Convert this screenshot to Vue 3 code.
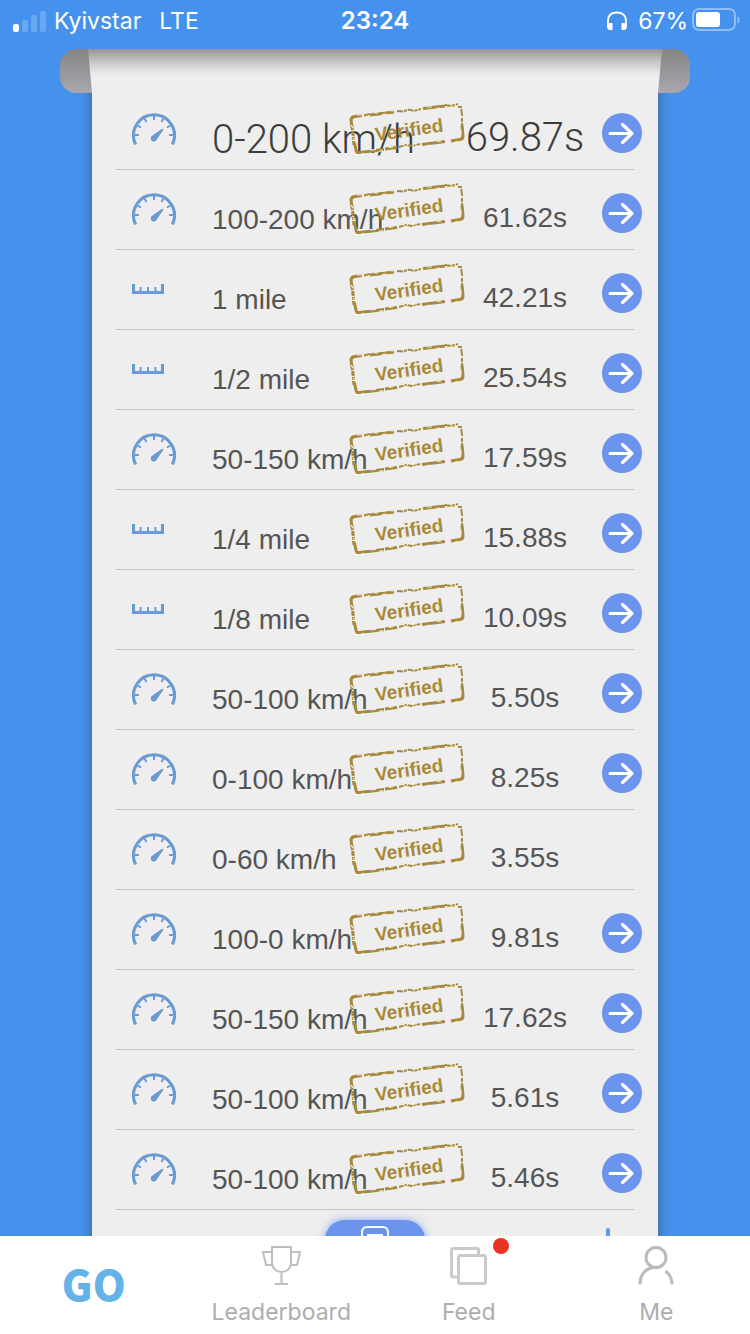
<script setup>
  import { ref } from "vue"

  const results = ref([
    { type: "speed", label: "0-200 km/h", time: "69.87s", link: true },
    { type: "speed", label: "100-200 km/h", time: "61.62s", link: true },
    { type: "distance", label: "1 mile", time: "42.21s", link: true },
    { type: "distance", label: "1/2 mile", time: "25.54s", link: true },
    { type: "speed", label: "50-150 km/h", time: "17.59s", link: true },
    { type: "distance", label: "1/4 mile", time: "15.88s", link: true },
    { type: "distance", label: "1/8 mile", time: "10.09s", link: true },
    { type: "speed", label: "50-100 km/h", time: "5.50s", link: true },
    { type: "speed", label: "0-100 km/h", time: "8.25s", link: true },
    { type: "speed", label: "0-60 km/h", time: "3.55s", link: false },
    { type: "speed", label: "100-0 km/h", time: "9.81s", link: true },
    { type: "speed", label: "50-150 km/h", time: "17.62s", link: true },
    { type: "speed", label: "50-100 km/h", time: "5.61s", link: true },
    { type: "speed", label: "50-100 km/h", time: "5.46s", link: true }
  ])

  // angles of the dial ticks, in degrees from the top
  const ticks = [-90, -60, -30, 0, 30, 60, 90]
</script>

<template>
  <div class="app">
    <header class="status-bar">
      <div class="status-left">
        <svg width="36" height="22" viewBox="0 0 36 22" fill="#fff">
          <rect x="3" y="14" width="6" height="8" rx="2" />
          <rect x="12" y="10" width="6" height="12" rx="2" opacity="0.2" />
          <rect x="21" y="5" width="6" height="17" rx="2" opacity="0.2" />
          <rect x="30" y="1" width="6" height="21" rx="2" opacity="0.2" />
        </svg>
        <span class="carrier">Kyivstar</span>
        <span>LTE</span>
      </div>
      <strong class="clock">23:24</strong>
      <div class="status-right">
        <svg width="22" height="20" viewBox="0 0 22 20">
          <path d="M2 15V10C2 4 6 1.500 11 1.500S20 4 20 10V15" fill="none" stroke="#fff" stroke-width="1.800" />
          <path d="M3.500 12h3v7h-2.500c-2 0-3-1.500-3-4zM18.500 12h-3v7h2.500c2 0 3-1.500 3-4z" fill="#fff" />
        </svg>
        <span class="percent">67%</span>
        <svg class="battery" width="48" height="24" viewBox="0 0 48 24">
          <rect x="1" y="1" width="42" height="21" rx="6" fill="none" stroke="#fff" stroke-width="2" opacity="0.4" />
          <path d="M45.500 8.500c3 1 3 6 0 7z" fill="#fff" opacity="0.4" />
          <rect x="4" y="4" width="24" height="15" rx="3" fill="#fff" />
        </svg>
      </div>
    </header>

    <main class="content">
      <div class="roller">
        <div class="paper-edge"></div>
      </div>
      <section class="paper">
        <ul class="results">
          <li v-for="(item, index) in results" :key="index" class="result" :class="{ main: index === 0 }">
            <div class="type">
              <svg v-if="item.type === 'speed'" width="44" height="32" viewBox="0 0 44 32">
                <path d="M3.700 31.500A20.500 20.500 0 1 1 40.300 31.500" fill="none" stroke="#6899d4" stroke-width="3" />
                <line v-for="angle in ticks" :key="angle" x1="22" y1="3" x2="22" y2="7" stroke="#6899d4" stroke-width="2" :transform="`rotate(${angle} 22 22)`" />
                <path d="M30.500 15.500l1 1-6.500 9.500a3.200 3.200 0 1 1-4.500-3.500z" fill="#6899d4" />
              </svg>
              <svg v-else width="44" height="32" viewBox="0 0 44 32">
                <path d="M0 11h3v7h4.500v-4h2v4h5.500v-4h2v4h5.500v-4h2v4h4.500v-7h3v10h-32z" fill="#6899d4" />
              </svg>
            </div>
            <span class="label">{{ item.label }}</span>
            <span class="time">{{ item.time }}</span>
            <button v-if="item.link" class="open" type="button" :aria-label="item.label">
              <svg width="40" height="40" viewBox="0 0 40 40" fill="none" stroke="#fff" stroke-width="3.200" stroke-linecap="round" stroke-linejoin="round">
                <path d="M8 20.500H30M20.500 11.500l9.500 9-9.500 9" />
              </svg>
            </button>
            <svg class="stamp" width="118" height="54" viewBox="0 0 118 54">
              <g fill="none" stroke="#a8893c">
                <path d="M4 24L3 17Q3 14 7 13.500L14 12.500M22 12L46 9M75 5.500L97 3" stroke-width="3" />
                <path d="M16 12.500L22 11M49 8L55 8.500 61 6.500 66 8 73 6M97 2L103 3 110 1" stroke-width="2" stroke-dasharray="6 1 3 1" />
                <path d="M4 24L5 31 6 42" stroke-width="3" stroke-dasharray="3 1 5 1" />
                <path d="M6.500 40L8 47Q8 50 12 49.500L36 46.500M37 46L49 44.500M74 41.500L97 38.500M103 38L112 36.500Q115 36 115 33L114 22" stroke-width="3" />
                <path d="M51 44L58 42 64 43 72 41" stroke-width="2" stroke-dasharray="5 1 2 1" />
                <path d="M110 4L113 4 114 12 114 22" stroke-width="2" stroke-dasharray="4 1 7 2" />
              </g>
              <!-- worn spots in the ink -->
              <path d="M9 12l6 0M26 10l4 0M34 11.500l5-.5M43 8l2 0M79 4l5 0M88 5.500l4-.5M3 22l2 3M5 35l2 3M13 51l4-.5M22 47l6-.5M31 48.500l4-1M41 44.500l4-.5M78 43l5-1M89 38.500l4-.5M107 39l3-.5M113 27l0 4" fill="none" stroke="#eee" stroke-width="1.200" />
              <text x="28" y="38" transform="rotate(-8 28 38)">Verified</text>
            </svg>
          </li>
        </ul>
        <div class="actions">
          <button class="report" type="button" aria-label="Report">
            <svg width="28" height="32" viewBox="0 0 28 32" fill="none" stroke="#fff" stroke-width="2">
              <rect x="1" y="1" width="26" height="30" rx="5" />
              <path d="M6 9H22M6 16H22M6 23H16" />
            </svg>
          </button>
          <button class="add" type="button" aria-label="Add">
            <svg width="32" height="32" viewBox="0 0 32 32" stroke="#6b94ee" stroke-width="4" stroke-linecap="round">
              <path d="M16 2V30M2 16H30" />
            </svg>
          </button>
        </div>
      </section>
    </main>

    <nav class="tab-bar">
      <a class="tab go" href="#">GO</a>
      <a class="tab" href="#">
        <svg width="40" height="40" viewBox="0 0 40 40" fill="none" stroke="#bebebe" stroke-width="2">
          <path d="M11 1H30V17C30 22 26 26 20.500 26S11 22 11 17ZM11 6H2L5 19H12M30 6H39L36 19H29M20.500 26V38M14 38H27" />
        </svg>
        <span>Leaderboard</span>
      </a>
      <a class="tab" href="#">
        <span class="tab-icon">
          <svg width="40" height="40" viewBox="0 0 40 40" fill="none" stroke="#cacaca" stroke-width="3">
            <path d="M9 31H4Q2.500 31 2.500 29.500V4Q2.500 2.500 4 2.500H28Q29.500 2.500 29.500 4V9" />
            <rect x="9.500" y="9.500" width="27" height="28" rx="2" />
          </svg>
          <i class="badge"></i>
        </span>
        <span>Feed</span>
      </a>
      <a class="tab" href="#">
        <svg width="40" height="40" viewBox="0 0 40 40" fill="none" stroke="#bababa" stroke-width="3">
          <circle cx="20" cy="11.500" r="10" />
          <path d="M17 21.500C9 23 4 29 4 38.500" />
          <path d="M29.500 25C33.500 28 36 32 36 38.500" />
        </svg>
        <span>Me</span>
      </a>
    </nav>
  </div>
</template>

<style>
  body {
    background: #4592ee;
  }
</style>

<style scoped>
  .app {
    display: flex;
    flex-direction: column;
    height: 100vh;
    overflow: hidden;
    background: #4592ee;
    font-family: Inter, sans-serif;
  }

  button {
    padding: 0;
    border: 0;
    background: none;
    cursor: pointer;
  }

  svg {
    display: block;
    flex: none;
  }

  .status-bar {
    display: grid;
    grid-template-columns: 1fr auto 1fr;
    align-items: center;
    box-sizing: border-box;
    height: 49px;
    padding: 0 10px 8px;
    color: #fff;
    font-size: 23px;
    line-height: 28px;
  }

  .status-left,
  .status-right {
    display: flex;
    align-items: center;
  }

  .status-right {
    justify-content: flex-end;
  }

  .carrier {
    margin: 0 18px 0 8px;
  }

  .percent {
    margin: 0 4px 0 10px;
  }

  .battery {
    margin-bottom: 2px;
  }

  .clock {
    font-size: 24px;
    font-weight: 600;
  }

  .content {
    position: relative;
    flex: 1;
    min-height: 0;
    overflow: hidden;
  }

  .roller {
    position: absolute;
    z-index: 1;
    top: 0;
    left: 60px;
    right: 60px;
    height: 44px;
    padding: 0 28px;
    box-sizing: border-box;
    border-radius: 16px;
    background: linear-gradient(#858585, #a9a6ae);
  }

  .paper-edge {
    height: 100%;
    background: linear-gradient(#949498, #c4c4c6 12px, #e8e8e8 24px, #eee 28px);
    clip-path: polygon(0 0, 100% 0, calc(100% - 4px) 100%, 4px 100%);
  }

  .paper {
    min-height: 100%;
    margin: 0 92px;
    padding: 41px 24px 0;
    box-sizing: border-box;
    background: #eee;
    box-shadow: 0 0 12px rgba(60, 60, 60, 0.6);
  }

  .results {
    margin: 0;
    padding: 0;
    list-style: none;
    font-family: "Liberation Sans", Arial, sans-serif;
  }

  .result {
    position: relative;
    display: flex;
    align-items: center;
    height: 80px;
    box-sizing: border-box;
    border-bottom: 1px solid #c4c4c4;
    color: #555;
    font-size: 28px;
    line-height: 40px;
    white-space: nowrap;
  }

  .main .label,
  .main .time {
    color: #3c3c3c;
    font-family: Roboto, sans-serif;
    font-size: 40px;
    font-weight: 300;
  }

  .type {
    width: 80px;
    padding: 0 0 2px 16px;
  }

  .label {
    flex: 1;
    min-width: 0;
    padding-top: 20px;
  }

  .time {
    width: 120px;
    margin-right: 49px;
    padding-top: 16px;
    text-align: center;
  }

  .open {
    width: 40px;
    height: 40px;
    margin: 6px -8px 0 -32px;
    border-radius: 50%;
    background: #6b94ee;
  }

  .stamp {
    position: absolute;
    top: 13px;
    right: 168px;

    text {
      fill: #a8893c;
      font-size: 19px;
      font-weight: bold;
    }
  }

  .actions {
    display: grid;
    grid-template-columns: 1fr 100px 1fr;
    align-items: start;
    padding-top: 10px;
  }

  .report {
    grid-column: 2;
    display: flex;
    justify-content: center;
    height: 44px;
    padding-top: 6px;
    border-radius: 20px;
    background: #6b94ee;
    box-shadow: 0 0 8px rgba(107, 148, 238, 0.8);
  }

  .add {
    justify-self: end;
    margin: 8px 10px 0 0;
  }

  .tab-bar {
    display: grid;
    grid-template-columns: repeat(4, 1fr);
    height: 98px;
    background: #fff;
  }

  .tab {
    display: flex;
    flex-direction: column;
    align-items: center;
    gap: 12px;
    padding-top: 10px;
    color: #adadad;
    font-size: 23px;
    line-height: 28px;
    text-decoration: none;
  }

  .go {
    justify-content: center;
    padding: 0 0 4px;
    color: #65b2e8;
    font-family: "Noto Sans CJK SC", sans-serif;
    font-size: 42px;
    font-weight: 900;
  }

  .tab-icon {
    position: relative;
  }

  .badge {
    position: absolute;
    top: -8px;
    right: -20px;
    width: 16px;
    height: 16px;
    border-radius: 50%;
    background: #e93223;
  }
</style>
